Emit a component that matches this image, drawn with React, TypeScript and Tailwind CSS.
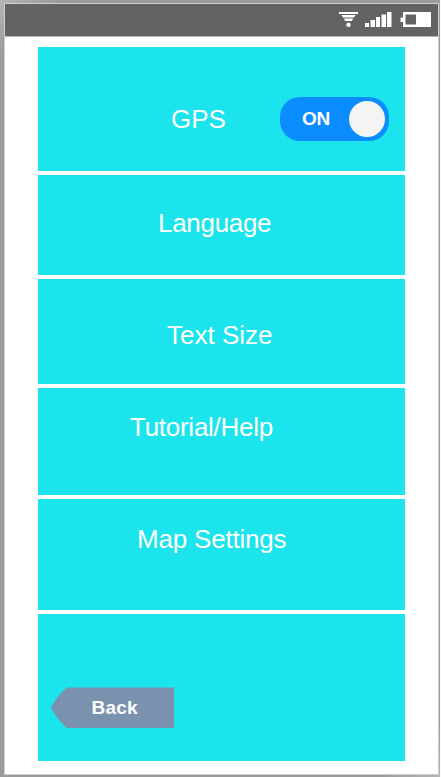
import React from 'react'

const StatusBar = () => {
    return (
        <div className='h-[33px] shrink-0 bg-[#636365] border-b border-[#b5b5b5] flex justify-end'>
            <svg width='102' height='32' viewBox='336 4 102 32' fill='#ffffff'>
                <path d='M339 12h19v2h-19z M341.500 15h14l-1.500 2.500h-11z M344 18.500h9l-1 2.500h-7z' />
                <circle cx='348.500' cy='24.800' r='2.200' />
                <path d='M365 23h4v4h-4z M370.500 20h4.500v7h-4.500z M376 17h4v10h-4z M381.500 14.500h4.500v12.500h-4.500z M387 12h4.500v15h-4.500z' />
                <path fillRule='evenodd' d='M403 12h28v15h-28v-5h-2.500v-4.500h2.500z M405.500 14.500v10h10.500v-10z' />
            </svg>
        </div>
    )
}

const Toggle = () => {
    return (
        <button className='ml-[54px] mt-[50px] w-[108.500px] h-[43.500px] rounded-[20px] bg-[#0b8cff] flex items-center justify-between pl-[22px] pr-1'>
            <span className='text-[19px] leading-[22px] font-bold tracking-[-0.3px]'>ON</span>
            <span className='w-9 h-9 rounded-full bg-[#f4f4f4]'></span>
        </button>
    )
}

const BackButton = () => {
    return (
        <button className='relative block w-[123px] h-[41px] text-[19px] leading-[22px] font-bold tracking-[0.2px]'>
            <svg className='absolute inset-0' width='123' height='41' viewBox='0 0 123 41'>
                <path d='M16 0.400H123V41H16Q7 34 0 20.500Q7 7 16 0.400Z' fill='#7b92af' />
            </svg>
            <span className='relative block pl-[40.500px] text-left'>Back</span>
        </button>
    )
}

const App = () => {
    return (
        <div className='w-[441px] h-[777px] bg-[#fafafa] overflow-hidden'>
            <div className='w-[440px] h-[777px] pt-[3px] pl-1 pr-px pb-[2px] bg-[linear-gradient(135deg,#b5b5b5_0%,#9b9b9b_5%,#9b9b9b_95%,#b5b5b5_100%)]'>
                <div className='w-[435px] h-[772px] border border-[#cfcfcf] bg-white flex flex-col text-white font-["Liberation_Sans",Arial,sans-serif] text-[26px] leading-[30px]'>
                    <StatusBar />
                    <div className='mt-[10px] ml-[33px] w-[367px] flex flex-col gap-1 *:bg-[#1be4ed]'>
                        <div className='h-[123.500px] flex items-start pl-[133px]'>
                            <p className='mt-[57px] w-[55px]'>GPS</p>
                            <Toggle />
                        </div>
                        <div className='h-[100.500px] pt-[33px] pl-[120px] tracking-[-0.3px]'>Language</div>
                        <div className='h-[104.500px] pt-[41px] pl-[129px]'>Text Size</div>
                        <div className='h-[107.500px] pt-[24px] pl-[92px] tracking-[-0.27px]'>Tutorial/Help</div>
                        <div className='h-[111px] pt-[25px] pl-[99px] tracking-[-0.2px]'>Map Settings</div>
                        <div className='h-[147px] pt-[73px] pl-[13px]'>
                            <BackButton />
                        </div>
                    </div>
                </div>
            </div>
        </div>
    )
}

export default App
